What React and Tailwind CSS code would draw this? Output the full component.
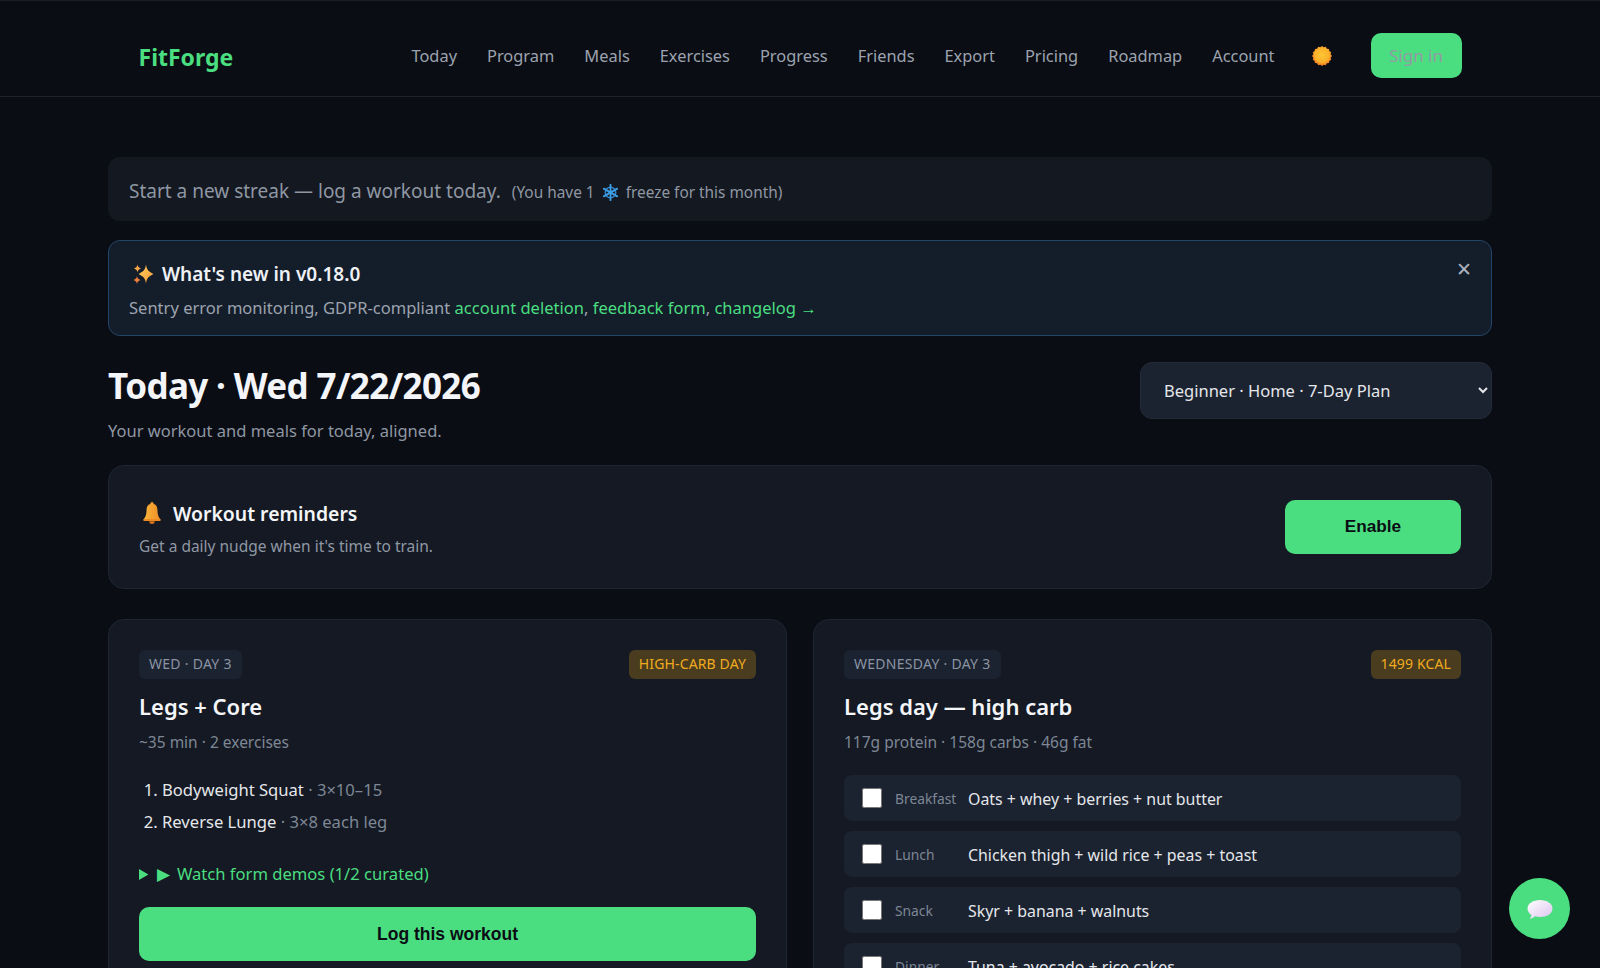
import React from 'react';

const navLinks = ['Today', 'Program', 'Meals', 'Exercises', 'Progress', 'Friends', 'Export', 'Pricing', 'Roadmap', 'Account'];

const meals = [
  { label: 'Breakfast', food: 'Oats + whey + berries + nut butter' },
  { label: 'Lunch', food: 'Chicken thigh + wild rice + peas + toast' },
  { label: 'Snack', food: 'Skyr + banana + walnuts' },
  { label: 'Dinner', food: 'Tuna + avocado + rice cakes' },
];

function SunIcon() {
  const points = [];
  for (let i = 0; i < 32; i++) {
    const r = i % 2 === 0 ? 10 : 8.8;
    const a = (i / 32) * Math.PI * 2;
    points.push(`${(10 + r * Math.cos(a)).toFixed(2)},${(10 + r * Math.sin(a)).toFixed(2)}`);
  }
  return (
    <svg width="20" height="20" viewBox="0 0 20 20">
      <defs>
        <radialGradient id="sun" cx="50%" cy="45%" r="55%">
          <stop offset="0%" stopColor="#fcc733" />
          <stop offset="65%" stopColor="#fbb02b" />
          <stop offset="100%" stopColor="#f0701e" />
        </radialGradient>
      </defs>
      <polygon points={points.join(' ')} fill="url(#sun)" />
    </svg>
  );
}

function SnowIcon() {
  return (
    <svg width="17" height="17" viewBox="0 0 18 18" fill="none" stroke="#3f9fe6" strokeLinecap="round">
      <circle cx="9" cy="9" r="5.500" strokeWidth="1.600" stroke="#2f86cf" />
      <path d="M9 .8v16.400M1.900 4.900l14.200 8.200M16.100 4.900L1.900 13.100" strokeWidth="1.900" />
    </svg>
  );
}

function SparkleIcon() {
  return (
    <svg width="22" height="22" viewBox="0 0 22 22">
      <defs>
        <linearGradient id="spark" x1="0" y1="0" x2="1" y2="1">
          <stop offset="0%" stopColor="#fcd05a" />
          <stop offset="100%" stopColor="#f79a3a" />
        </linearGradient>
      </defs>
      <path d="M14 1.500c.7 5 2.300 6.900 7.500 9.500-5.200 2.600-6.800 4.500-7.500 9.500-.7-5-2.300-6.900-7.500-9.500 5.200-2.600 6.800-4.500 7.500-9.500z" fill="url(#spark)" />
      <path d="M5.500 1.500c.4 2.300 1.200 3.200 3.500 4-2.300.8-3.100 1.700-3.500 4-.4-2.300-1.200-3.200-3.500-4 2.300-.8 3.100-1.700 3.500-4z" fill="#f8a548" />
      <path d="M5 13c.4 2.300 1.200 3.200 3.500 4-2.300.8-3.100 1.700-3.500 4-.4-2.300-1.200-3.200-3.500-4 2.300-.8 3.100-1.700 3.500-4z" fill="#ef7f3c" />
    </svg>
  );
}

function BellIcon() {
  return (
    <svg width="24" height="24" viewBox="0 0 22 22">
      <defs>
        <linearGradient id="bell" x1="0" y1="0" x2="1" y2="0">
          <stop offset="0%" stopColor="#f8b73c" />
          <stop offset="100%" stopColor="#ee8c25" />
        </linearGradient>
      </defs>
      <circle cx="11" cy="2.500" r="1.500" fill="#f2a02f" />
      <path d="M11 2.500c-3.600 0-5 2.700-5 6 0 4.400-1.200 6.700-3 8.500h16c-1.800-1.800-3-4.100-3-8.500 0-3.300-1.400-6-5-6z" fill="url(#bell)" />
      <rect x="3" y="16.500" width="16" height="1.800" rx=".9" fill="#e98a24" />
      <path d="M8.500 18.500h5a2.500 2.500 0 0 1-5 0z" fill="#d9741c" />
    </svg>
  );
}

function ChatBubble() {
  return (
    <svg width="28" height="24" viewBox="0 0 28 24">
      <defs>
        <linearGradient id="bubble" x1="0" y1="0" x2="1" y2="1">
          <stop offset="0%" stopColor="#ffffff" />
          <stop offset="100%" stopColor="#dcc4ee" />
        </linearGradient>
      </defs>
      <path d="M14 3c7 0 12.500 3.500 12.500 8.500S21 20 14 20c-1.800 0-3.500-.2-5-.7-1.300 1.300-3 2.200-5.200 2.400 1-1.100 1.500-2.300 1.600-3.700C3 16.400 1.500 14.100 1.500 11.500 1.500 6.500 7 3 14 3z" fill="url(#bubble)" />
    </svg>
  );
}

function Pill({ children }) {
  return <span className="rounded-md bg-[#1b2331] px-[10px] pb-[2px] h-[29px] flex items-center text-[14px] text-[#8b94a3] tracking-[0.02em]">{children}</span>;
}

function AmberPill({ children }) {
  return <span className="rounded-md bg-[#4a3c1e] px-[10px] pb-[2px] h-[29px] flex items-center text-[14px] text-[#f0ab1f] tracking-[0.01em]">{children}</span>;
}

export default function App() {
  return (
    <div className="relative h-screen overflow-hidden bg-[#0a0d14] font-['Noto_Sans',sans-serif] text-[#e5e7eb]">
      {/* Header */}
      <header className="h-[97px] border-b border-[#1f2329] border-t-[#1a1f27] border-t pt-[14px]">
        <div className="mx-auto flex h-full w-[1323px] items-center justify-between">
          <span className="pt-[3px] text-[23px] font-bold text-[#4ade80]">FitForge</span>
          <nav className="flex items-center">
            <div className="flex items-center gap-[30px] pt-[2px] text-[16.4px] text-[#9ca3af]">
              {navLinks.map(link => (
                <a key={link}>{link}</a>
              ))}
            </div>
            <span className="ml-[37px] flex"><SunIcon /></span>
            <button className="ml-[39px] h-[45px] w-[91px] rounded-[10px] bg-[#4ade80] text-[17px] text-[#949aa6]">Sign in</button>
          </nav>
        </div>
      </header>

      <main className="mx-auto w-[1384px] pt-[60px]">
        {/* Streak */}
        <div className="flex h-[64px] items-center gap-[10px] rounded-xl bg-[#141820] px-[21px] pt-[4px] text-[#8f97a3]">
          <span className="text-[19px]">Start a new streak — log a workout today.</span>
          <span className="ml-[1px] mt-[3px] flex items-center gap-[7px] text-[15.4px]">(You have 1 <SnowIcon /> freeze for this month)</span>
        </div>

        {/* What's new */}
        <div className="relative mt-[19px] h-[96px] rounded-xl border-[1.5px] border-[#234668] bg-[#141d2a] px-[20px] pt-[19px]">
          <div className="flex items-center gap-[8px] pl-[3px] text-[19px] font-semibold text-[#eef1f5]">
            <SparkleIcon />
            <span>What&apos;s new in v0.18.0</span>
          </div>
          <p className="mt-[7px] text-[16.55px] text-[#9ca3af]">
            Sentry error monitoring, GDPR-compliant <a className="text-[#4ade80]">account deletion</a>, <a className="text-[#4ade80]">feedback form</a>, <a className="text-[#4ade80]">changelog →</a>
          </p>
          <button className="absolute right-[19px] top-[14px] text-[19px] text-[#aab1bc]">✕</button>
        </div>

        {/* Title row */}
        <div className="mt-[25px] flex items-start justify-between">
          <div>
            <h1 className="text-[35px] font-bold leading-[50px] tracking-[-0.62px] text-[#f3f5f8]">Today · Wed 7/22/2026</h1>
            <p className="mt-[8px] text-[16.5px] leading-[24px] text-[#8f97a3]">Your workout and meals for today, aligned.</p>
          </div>
          <select defaultValue="beginner" className="mt-[1px] h-[57px] w-[352px] rounded-xl border border-[#232b38] bg-[#1b2230] pl-[19px] pr-[8px] text-[16.5px] text-[#e5e7eb]">
            <option value="beginner">Beginner · Home · 7-Day Plan</option>
          </select>
        </div>

        {/* Reminders */}
        <div className="mt-[22px] flex h-[124px] items-center justify-between rounded-2xl border border-[#1f2632] bg-[#141923] px-[30px]">
          <div className="pt-[3px]">
            <div className="flex items-center gap-[9px] pl-[1px] text-[19.4px] font-semibold text-[#f3f5f8]">
              <BellIcon />
              <span>Workout reminders</span>
            </div>
            <p className="mt-[7px] text-[15.5px] text-[#8f97a3]">Get a daily nudge when it&apos;s time to train.</p>
          </div>
          <button className="h-[54px] w-[176px] rounded-[10px] bg-[#4ade80] font-['Liberation_Sans',sans-serif] text-[17.2px] font-bold text-[#0a0d14]">Enable</button>
        </div>

        {/* Workout + meals */}
        <div className="mt-[30px] grid grid-cols-2 gap-[26px]">
          <section className="rounded-2xl border border-[#1f2632] bg-[#141923] p-[30px]">
            <div className="flex items-center justify-between">
              <Pill>WED · DAY 3</Pill>
              <AmberPill>HIGH-CARB DAY</AmberPill>
            </div>
            <h2 className="mt-[12px] text-[22px] font-semibold leading-[30px] text-[#f3f5f8]">Legs + Core</h2>
            <p className="mt-[9px] text-[15.5px] leading-[24px] text-[#7e8795]">~35 min · 2 exercises</p>
            <ol className="mt-[20px] list-decimal pl-[23px] text-[16.6px] leading-[32px] text-[#e5e7eb]">
              <li>Bodyweight Squat <span className="text-[#7e8795]">· 3×10–15</span></li>
              <li>Reverse Lunge <span className="text-[#7e8795]">· 3×8 each leg</span></li>
            </ol>
            <details className="mt-[24px] text-[16.6px] leading-[24px] text-[#4ade80]">
              <summary><span className="mr-[3px]">▶</span> Watch form demos (1/2 curated)</summary>
            </details>
            <button className="mt-[21px] h-[54px] w-full rounded-[10px] bg-[#4ade80] font-['Liberation_Sans',sans-serif] text-[17.5px] font-bold text-[#0a0d14]">Log this workout</button>
          </section>

          <section className="rounded-2xl border border-[#1f2632] bg-[#141923] p-[30px]">
            <div className="flex items-center justify-between">
              <Pill>WEDNESDAY · DAY 3</Pill>
              <AmberPill>1499 KCAL</AmberPill>
            </div>
            <h2 className="mt-[12px] text-[22px] font-semibold leading-[30px] text-[#f3f5f8]">Legs day — high carb</h2>
            <p className="mt-[9px] text-[15.5px] leading-[24px] text-[#7e8795]">117g protein · 158g carbs · 46g fat</p>
            <div className="mt-[21px] flex flex-col gap-[10px]">
              {meals.map(meal => (
                <div key={meal.label} className="flex h-[46px] items-center rounded-lg bg-[#1b2230] px-[18px]">
                  <input type="checkbox" className="h-[20px] w-[20px]" />
                  <span className="ml-[13px] mt-[2px] w-[73px] text-[13.8px] text-[#7e8795]">{meal.label}</span>
                  <span className="mt-[4px] text-[15.9px] text-[#e5e7eb]">{meal.food}</span>
                </div>
              ))}
            </div>
          </section>
        </div>
      </main>

      {/* Chat button */}
      <button className="absolute bottom-[29px] right-[30px] flex h-[61px] w-[61px] items-center justify-center rounded-full bg-[#4ade80]">
        <ChatBubble />
      </button>
    </div>
  );
}
